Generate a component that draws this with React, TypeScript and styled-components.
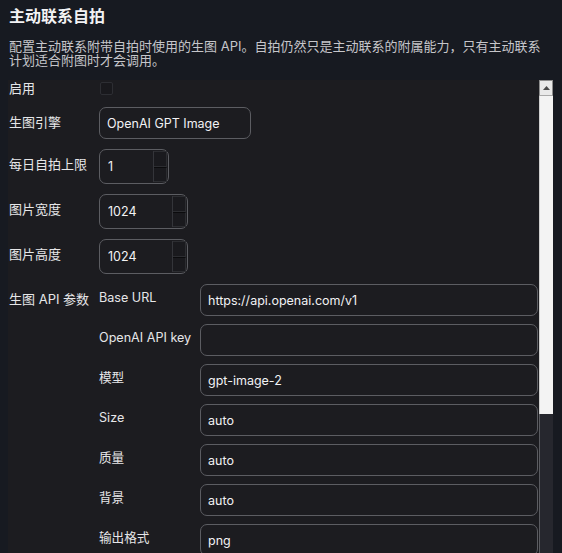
import { Fragment } from 'react'
import styled, { createGlobalStyle } from 'styled-components'

const GlobalStyle = createGlobalStyle`
  html,
  body {
    margin: 0;
    background: #171a21;
    overflow: hidden;
  }

  body {
    font-family: Inter, 'Noto Sans CJK SC', sans-serif;
    color: #e8e8ea;
  }
`

const Page = styled.div`
  padding: 0 9px 0 8px;
`

const Title = styled.h2`
  margin: 0;
  padding: 5px 0 0 1px;
  font-size: 16px;
  line-height: 22px;
  font-weight: 700;
  color: #f2f2f4;
`

const Description = styled.p`
  margin: 12px 8px 0 1px;
  font-size: 13px;
  line-height: 14px;
  color: #c6c6ca;
`

const Panel = styled.div`
  display: flex;
  margin-top: 13px;
  height: 500px;
  background: #1c1c20;
`

const Content = styled.div`
  flex: 1;
  min-width: 0;
  overflow: hidden;
`

const ScrollBar = styled.div`
  display: flex;
  flex-direction: column;
  width: 14px;
`

const ScrollButton = styled.div`
  box-sizing: border-box;
  display: flex;
  align-items: center;
  justify-content: center;
  height: 16px;
  background: #e9e9e9;
  border: 1px solid #8d8d8d;
  border-bottom-color: #a9a9a9;
`

const ScrollThumb = styled.div<{ $size: number }>`
  height: ${({ $size }) => $size}px;
  background: #f3f3f3;
  border-left: 1px solid #cfcfcf;
`

const ScrollTrack = styled.div`
  flex: 1;
  background: #26272e;
  border-left: 1px solid #5a5b60;
`

const Form = styled.div`
  display: grid;
  grid-template-columns: 90px 1fr;
  row-gap: 10px;
  padding: 0 1px 0 1px;
`

const Label = styled.div<{ $compact?: boolean }>`
  font-size: 13px;
  line-height: ${({ $compact }) => ($compact ? '17px' : '18px')};
  padding-top: ${({ $compact }) => ($compact ? '0' : '6px')};
  color: #e6e6e8;
  white-space: nowrap;
`

const CheckCell = styled.div`
  display: flex;
  height: 17px;
`

const Checkbox = styled.input.attrs({ type: 'checkbox' })`
  appearance: none;
  margin: 2px 0 0 1px;
  width: 13px;
  height: 13px;
  border: 1px solid #2d2e33;
  border-radius: 2px;
  background: #19191d;
  box-sizing: border-box;
`

const TextInput = styled.input<{ $width?: number }>`
  box-sizing: border-box;
  width: ${({ $width }) => ($width ? `${$width}px` : '100%')};
  height: 32px;
  padding: 0 7px;
  border: 1px solid #5c5d62;
  border-radius: 7px;
  background: #1c1c20;
  color: #f2f2f4;
  font-family: Inter, 'Noto Sans CJK SC', sans-serif;
  font-size: 12.5px;
  outline: none;
`

const NumberField = styled.div<{ $width: number }>`
  box-sizing: border-box;
  display: flex;
  align-items: stretch;
  width: ${({ $width }) => $width}px;
  height: 35px;
  padding: 1px 1px 1px 0;
  border: 1px solid #5c5d62;
  border-radius: 7px;
  background: #1c1c20;
`

const NumberInput = styled.input`
  flex: 1;
  min-width: 0;
  padding: 0 0 0 8px;
  border: none;
  background: transparent;
  color: #f2f2f4;
  font-family: Inter, 'Noto Sans CJK SC', sans-serif;
  font-size: 12.5px;
  outline: none;
`

const Spinner = styled.div`
  display: flex;
  flex-direction: column;
  width: 13px;
  border-left: 1px solid #34353a;
`

const SpinStep = styled.div`
  flex: 1;
  background: #1a1a1e;
  border: 1px solid #2c2d31;
  border-left: none;

  & + & {
    border-top: 1px solid #0b0b0d;
  }
`

const SubGrid = styled.div`
  display: grid;
  grid-template-columns: 101px 1fr;
  row-gap: 8px;
`

const SubLabel = styled.div`
  font-size: 12.6px;
  line-height: 18px;
  padding-top: 5px;
  color: #e6e6e8;
  white-space: nowrap;
`

const NumberBox = ({ value, width }: { value: string; width: number }) => (
  <NumberField $width={width}>
    <NumberInput inputMode="numeric" defaultValue={value} />
    <Spinner>
      <SpinStep />
      <SpinStep />
    </Spinner>
  </NumberField>
)

const apiParams = [
  { label: 'Base URL', value: 'https://api.openai.com/v1' },
  { label: 'OpenAI API key', value: '' },
  { label: '模型', value: 'gpt-image-2' },
  { label: 'Size', value: 'auto' },
  { label: '质量', value: 'auto' },
  { label: '背景', value: 'auto' },
  { label: '输出格式', value: 'png' },
]

export default function App() {
  return (
    <Page>
      <GlobalStyle />
      <Title>主动联系自拍</Title>
      <Description>
        配置主动联系附带自拍时使用的生图 API。自拍仍然只是主动联系的附属能力，只有主动联系计划适合附图时才会调用。
      </Description>
      <Panel>
        <Content>
          <Form>
            <Label $compact>启用</Label>
            <CheckCell>
              <Checkbox />
            </CheckCell>

            <Label>生图引擎</Label>
            <TextInput $width={152} defaultValue="OpenAI GPT Image" />

            <Label>每日自拍上限</Label>
            <NumberBox value="1" width={70} />

            <Label>图片宽度</Label>
            <NumberBox value="1024" width={89} />

            <Label>图片高度</Label>
            <NumberBox value="1024" width={89} />

            <Label>生图 API 参数</Label>
            <SubGrid>
              {apiParams.map((p) => (
                <Fragment key={p.label}>
                  <SubLabel>{p.label}</SubLabel>
                  <TextInput defaultValue={p.value} />
                </Fragment>
              ))}
            </SubGrid>
          </Form>
        </Content>
        <ScrollBar>
          <ScrollButton>
            <svg width="7" height="4" viewBox="0 0 7 4">
              <polygon points="3.5,0 7,4 0,4" fill="#4a4a4a" />
            </svg>
          </ScrollButton>
          <ScrollThumb $size={318} />
          <ScrollTrack />
        </ScrollBar>
      </Panel>
    </Page>
  )
}
